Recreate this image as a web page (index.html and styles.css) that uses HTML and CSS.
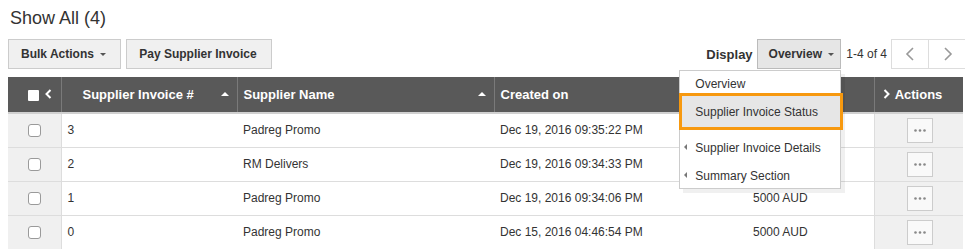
FILE: index.html
```html
<!DOCTYPE html>
<html>
<head>
  <title>Supplier Invoices</title>
  <link rel="stylesheet" href="styles.css">
</head>
<body>
  <div class="page">
    <h1 class="title">Show All (4)</h1>

    <div class="toolbar">
      <div class="toolbar-left">
        <button class="btn">Bulk Actions <span class="caret"></span></button>
        <button class="btn">Pay Supplier Invoice</button>
      </div>
      <div class="toolbar-right">
        <span class="display-label">Display</span>
        <div class="display-select">
          <button class="btn btn-active">Overview <span class="caret"></span></button>
          <ul class="menu">
            <li class="menu-item menu-first">Overview</li>
            <li class="menu-item menu-selected">Supplier Invoice Status</li>
            <li class="menu-item menu-sub">Supplier Invoice Details</li>
            <li class="menu-item menu-sub menu-last">Summary Section</li>
          </ul>
        </div>
        <span class="count">1-4 of 4</span>
        <div class="pager">
          <button class="pager-btn">
            <svg width="10" height="14" viewBox="0 0 10 14"><path d="M8 1 L2 7 L8 13" fill="none" stroke="#999" stroke-width="1.6"/></svg>
          </button>
          <button class="pager-btn">
            <svg width="10" height="14" viewBox="0 0 10 14"><path d="M2 1 L8 7 L2 13" fill="none" stroke="#999" stroke-width="1.6"/></svg>
          </button>
        </div>
      </div>
    </div>

    <table class="grid">
      <thead>
        <tr>
          <th class="col-check">
            <span class="head-check"></span>
            <svg class="head-chev" width="7" height="10" viewBox="0 0 7 10"><path d="M5.5 1 L1.5 5 L5.5 9" fill="none" stroke="#fff" stroke-width="2"/></svg>
          </th>
          <th class="col-invoice">Supplier Invoice # <span class="sort-up"></span></th>
          <th class="col-name">Supplier Name <span class="sort-up"></span></th>
          <th class="col-created">Created on</th>
          <th class="col-amount">Amount</th>
          <th class="col-actions">
            <svg class="head-chev" width="7" height="10" viewBox="0 0 7 10"><path d="M1.5 1 L5.5 5 L1.5 9" fill="none" stroke="#fff" stroke-width="2"/></svg>
            Actions
          </th>
        </tr>
      </thead>
      <tbody>
        <tr>
          <td class="col-check"><span class="check"></span></td>
          <td>3</td>
          <td>Padreg Promo</td>
          <td>Dec 19, 2016 09:35:22 PM</td>
          <td>5000 AUD</td>
          <td class="col-actions"><button class="more"><svg width="12" height="3" viewBox="0 0 12 3"><circle cx="1.5" cy="1.5" r="1.3" fill="#888"/><circle cx="6" cy="1.5" r="1.3" fill="#888"/><circle cx="10.5" cy="1.5" r="1.3" fill="#888"/></svg></button></td>
        </tr>
        <tr>
          <td class="col-check"><span class="check"></span></td>
          <td>2</td>
          <td>RM Delivers</td>
          <td>Dec 19, 2016 09:34:33 PM</td>
          <td>5000 AUD</td>
          <td class="col-actions"><button class="more"><svg width="12" height="3" viewBox="0 0 12 3"><circle cx="1.5" cy="1.5" r="1.3" fill="#888"/><circle cx="6" cy="1.5" r="1.3" fill="#888"/><circle cx="10.5" cy="1.5" r="1.3" fill="#888"/></svg></button></td>
        </tr>
        <tr>
          <td class="col-check"><span class="check"></span></td>
          <td>1</td>
          <td>Padreg Promo</td>
          <td>Dec 19, 2016 09:34:06 PM</td>
          <td>5000 AUD</td>
          <td class="col-actions"><button class="more"><svg width="12" height="3" viewBox="0 0 12 3"><circle cx="1.5" cy="1.5" r="1.3" fill="#888"/><circle cx="6" cy="1.5" r="1.3" fill="#888"/><circle cx="10.5" cy="1.5" r="1.3" fill="#888"/></svg></button></td>
        </tr>
        <tr>
          <td class="col-check"><span class="check"></span></td>
          <td>0</td>
          <td>Padreg Promo</td>
          <td>Dec 15, 2016 04:46:54 PM</td>
          <td>5000 AUD</td>
          <td class="col-actions"><button class="more"><svg width="12" height="3" viewBox="0 0 12 3"><circle cx="1.5" cy="1.5" r="1.3" fill="#888"/><circle cx="6" cy="1.5" r="1.3" fill="#888"/><circle cx="10.5" cy="1.5" r="1.3" fill="#888"/></svg></button></td>
        </tr>
      </tbody>
    </table>
  </div>
</body>
</html>
```

FILE: styles.css
```css
body {
  margin: 0;
  font-family: "Liberation Sans", Arial, sans-serif;
  color: #333333;
  background-color: #ffffff;
}
.page {
  padding: 8px 2px 0 8px;
}
.title {
  font-size: 18px;
  font-weight: normal;
  line-height: 20px;
  margin: 0 0 11px 2px;
  color: #333333;
}
.toolbar {
  display: flex;
  justify-content: space-between;
  align-items: center;
  height: 30px;
  margin-bottom: 8px;
}
.toolbar-left,
.toolbar-right {
  display: flex;
  align-items: center;
  gap: 5px;
  height: 30px;
}
.toolbar-right {
  gap: 4px;
}
.btn {
  height: 30px;
  padding: 0 14px 0 12px;
  border: 1px solid #cccccc;
  background-color: #f0f0f0;
  color: #333333;
  font-family: inherit;
  font-size: 12px;
  font-weight: bold;
  cursor: pointer;
}
.btn-active {
  padding: 0 6px 0 11px;
  background-color: #e6e6e6;
  border-color: #bbbbbb;
}
.caret {
  display: inline-block;
  width: 0;
  height: 0;
  margin-left: 3px;
  vertical-align: middle;
  border-left: 3px solid transparent;
  border-right: 3px solid transparent;
  border-top: 3px solid #555555;
}
.display-label {
  font-size: 13px;
  font-weight: bold;
}
.display-select {
  position: relative;
}
.count {
  font-size: 12px;
  margin-left: 1px;
}
.pager {
  display: flex;
  margin-right: -4px;
}
.pager-btn {
  width: 38px;
  height: 30px;
  border: 1px solid #dddddd;
  background-color: #ffffff;
  display: flex;
  align-items: center;
  justify-content: center;
  padding: 0;
}
.pager-btn + .pager-btn {
  border-left: none;
}
.menu {
  position: absolute;
  top: 31px;
  right: 0;
  width: 162px;
  margin: 0;
  padding: 0;
  list-style: none;
  background-color: #ffffff;
  border: 1px solid #cccccc;
  box-shadow: 4px 4px 0 rgba(0, 0, 0, 0.06);
  z-index: 5;
  box-sizing: border-box;
}
.menu-item {
  position: relative;
  font-size: 12px;
  line-height: 16px;
  padding: 6px 0 6px 15px;
  color: #333333;
  white-space: nowrap;
}
.menu-first {
  padding: 5px 0 1px 15px;
}
.menu-last {
  padding-bottom: 4px;
}
.menu-selected {
  margin: 0 -3px 4px -1px;
  padding: 8px 0 7px 13px;
  background-color: #e6e6e6;
  border: 3px solid #f7990f;
}
.menu-sub::before {
  content: "";
  position: absolute;
  left: 4px;
  top: 10px;
  border-top: 3px solid transparent;
  border-bottom: 3px solid transparent;
  border-right: 3px solid #777777;
}
.grid {
  width: 955px;
  border-collapse: collapse;
  table-layout: fixed;
  font-size: 12px;
}
.grid th,
.grid td {
  box-sizing: border-box;
}
.grid th {
  height: 36px;
  padding: 0 6px;
  background-color: #595959;
  color: #ffffff;
  font-size: 13px;
  font-weight: bold;
  text-align: left;
  white-space: nowrap;
  border-left: 1px solid #7a7a7a;
  border-bottom: 2px solid #d0d0d0;
  position: relative;
}
.grid th:first-child {
  border-left: none;
}
.grid td {
  height: 34px;
  padding: 0 6px;
  border-bottom: 1px solid #dddddd;
  color: #333333;
}
.grid th.col-check,
.grid td.col-check {
  width: 53px;
  padding: 0;
  text-align: center;
}
.grid th.col-check {
  text-align: left;
  padding-left: 20px;
}
.grid td.col-check {
  background-color: #f0f0f0;
  border-right: 1px solid #dddddd;
}
.col-invoice { width: 176px; }
.grid th.col-invoice { padding-left: 21px; }
.col-name { width: 257px; }
.col-created { width: 253px; }
.col-amount { width: 127px; }
.grid th.col-actions,
.grid td.col-actions {
  width: 89px;
}
.grid td.col-actions {
  background-color: #f0f0f0;
  border-left: 1px solid #dddddd;
  text-align: center;
}
.head-check {
  display: inline-block;
  width: 11px;
  height: 11px;
  background-color: #ffffff;
  border-radius: 1px;
  vertical-align: middle;
}
.head-chev {
  vertical-align: middle;
  margin-left: 2px;
  margin-right: 2px;
  position: relative;
  top: -2px;
}
.sort-up {
  position: absolute;
  right: 8px;
  top: 15px;
  border-left: 4px solid transparent;
  border-right: 4px solid transparent;
  border-bottom: 4px solid #ffffff;
}
.check {
  display: inline-block;
  width: 13px;
  height: 13px;
  box-sizing: border-box;
  border: 1px solid #9a9a9a;
  border-radius: 3px;
  background-color: #ffffff;
  vertical-align: middle;
}
.more {
  width: 26px;
  height: 25px;
  padding: 0;
  border: 1px solid #cccccc;
  background-color: #f9f9f9;
  display: inline-flex;
  align-items: center;
  justify-content: center;
  vertical-align: middle;
  margin-left: 2px;
}
```
